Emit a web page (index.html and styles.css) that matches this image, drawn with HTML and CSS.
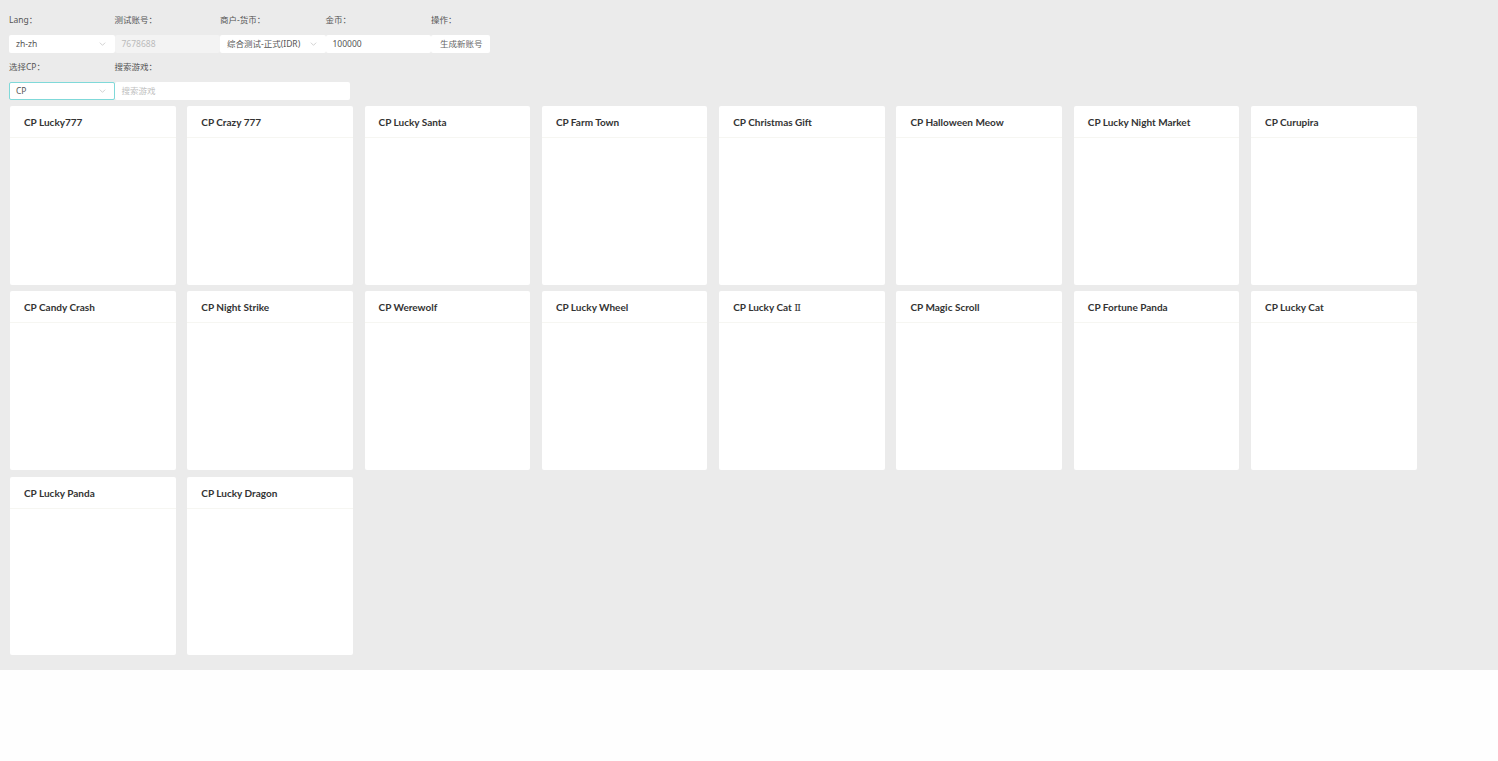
FILE: index.html
```html
<!DOCTYPE html>
<html lang="zh">
<head>
<meta charset="utf-8">
<title>测试账号</title>
<link rel="stylesheet" href="styles.css">
</head>
<body>
<div class="app">
  <div class="form-row">
    <div class="field">
      <label class="field-label">Lang：</label>
      <div class="select"><span>zh-zh</span><svg class="chev" viewBox="0 0 10 6"><path d="M1 1l4 4 4-4"/></svg></div>
    </div>
    <div class="field">
      <label class="field-label">测试账号：</label>
      <div class="input disabled">7678688</div>
    </div>
    <div class="field">
      <label class="field-label">商户-货币：</label>
      <div class="select"><span>综合测试-正式(IDR)</span><svg class="chev" viewBox="0 0 10 6"><path d="M1 1l4 4 4-4"/></svg></div>
    </div>
    <div class="field">
      <label class="field-label">金币：</label>
      <div class="input">100000</div>
    </div>
    <div class="field field-btn">
      <label class="field-label">操作：</label>
      <button class="btn">生成新账号</button>
    </div>
  </div>
  <div class="form-row">
    <div class="field">
      <label class="field-label">选择CP：</label>
      <div class="select focused"><span>CP</span><svg class="chev" viewBox="0 0 10 6"><path d="M1 1l4 4 4-4"/></svg></div>
    </div>
    <div class="field field-wide">
      <label class="field-label">搜索游戏：</label>
      <div class="input placeholder">搜索游戏</div>
    </div>
  </div>
  <div class="games">
    <div class="card"><div class="card-head">CP Lucky777</div><div class="card-body"></div></div>
    <div class="card"><div class="card-head">CP Crazy 777</div><div class="card-body"></div></div>
    <div class="card"><div class="card-head">CP Lucky Santa</div><div class="card-body"></div></div>
    <div class="card"><div class="card-head">CP Farm Town</div><div class="card-body"></div></div>
    <div class="card"><div class="card-head">CP Christmas Gift</div><div class="card-body"></div></div>
    <div class="card"><div class="card-head">CP Halloween Meow</div><div class="card-body"></div></div>
    <div class="card"><div class="card-head">CP Lucky Night Market</div><div class="card-body"></div></div>
    <div class="card"><div class="card-head">CP Curupira</div><div class="card-body"></div></div>
    <div class="card"><div class="card-head">CP Candy Crash</div><div class="card-body"></div></div>
    <div class="card"><div class="card-head">CP Night Strike</div><div class="card-body"></div></div>
    <div class="card"><div class="card-head">CP Werewolf</div><div class="card-body"></div></div>
    <div class="card"><div class="card-head">CP Lucky Wheel</div><div class="card-body"></div></div>
    <div class="card"><div class="card-head">CP Lucky Cat <span class="roman">Ⅱ</span></div><div class="card-body"></div></div>
    <div class="card"><div class="card-head">CP Magic Scroll</div><div class="card-body"></div></div>
    <div class="card"><div class="card-head">CP Fortune Panda</div><div class="card-body"></div></div>
    <div class="card"><div class="card-head">CP Lucky Cat</div><div class="card-body"></div></div>
    <div class="card"><div class="card-head">CP Lucky Panda</div><div class="card-body"></div></div>
    <div class="card"><div class="card-head">CP Lucky Dragon</div><div class="card-body"></div></div>
  </div>
</div>
</body>
</html>
```
FILE: styles.css
```css
html, body {
  margin: 0;
  padding: 0;
  background: #fefefe;
}

body {
  font-family: "Noto Sans", "Noto Sans CJK SC", sans-serif;
  color: #333;
}

.app {
  background: #ebebeb;
  padding: 12px 9px 15px 9px;
}

.form-row {
  display: flex;
  align-items: flex-end;
  margin-bottom: 6px;
}

.field {
  display: flex;
  flex-direction: column;
  width: 105.5px;
}

.field-wide {
  width: 235px;
}

.field-btn {
  width: auto;
}

.field-label {
  font-size: 8.5px;
  line-height: 16px;
  color: #555;
  height: 16px;
  margin-bottom: 7px;
  white-space: nowrap;
}

.select,
.input,
.btn {
  box-sizing: border-box;
  height: 18px;
  font-size: 8.5px;
  line-height: 16px;
  border: 1px solid transparent;
  border-radius: 2px;
  background: #ffffff;
  color: #555;
  padding: 0 6px;
  white-space: nowrap;
}

.select {
  display: flex;
  align-items: center;
  justify-content: space-between;
}

.select.focused {
  border-color: #7fd9d9;
}

.chev {
  width: 7px;
  height: 4px;
  margin-right: 2px;
  fill: none;
  stroke: #bbb;
  stroke-width: 1;
}

.input.disabled {
  background: #f3f3f3;
  color: #bbb;
}

.input.placeholder {
  color: #c0c0c0;
}

.btn {
  font-family: inherit;
  color: #666;
  padding: 0 8px;
  width: 59px;
  cursor: pointer;
}

.games {
  display: flex;
  flex-wrap: wrap;
  column-gap: 11.8px;
  row-gap: 6.6px;
  padding-left: 1px;
  width: 1408px;
}

.card {
  width: 165.5px;
  height: 178.7px;
  background: #ffffff;
  border-radius: 2px;
  display: flex;
  flex-direction: column;
}

.card-head {
  height: 31px;
  line-height: 33px;
  padding-left: 14px;
  font-family: Lato, "Noto Sans", sans-serif;
  font-size: 10px;
  font-weight: 700;
  color: #333;
  border-bottom: 1px solid #f6f6f2;
  white-space: nowrap;
}

.roman {
  font-family: "DejaVu Serif", serif;
  font-weight: 400;
}

.card-body {
  flex: 1;
}
```
